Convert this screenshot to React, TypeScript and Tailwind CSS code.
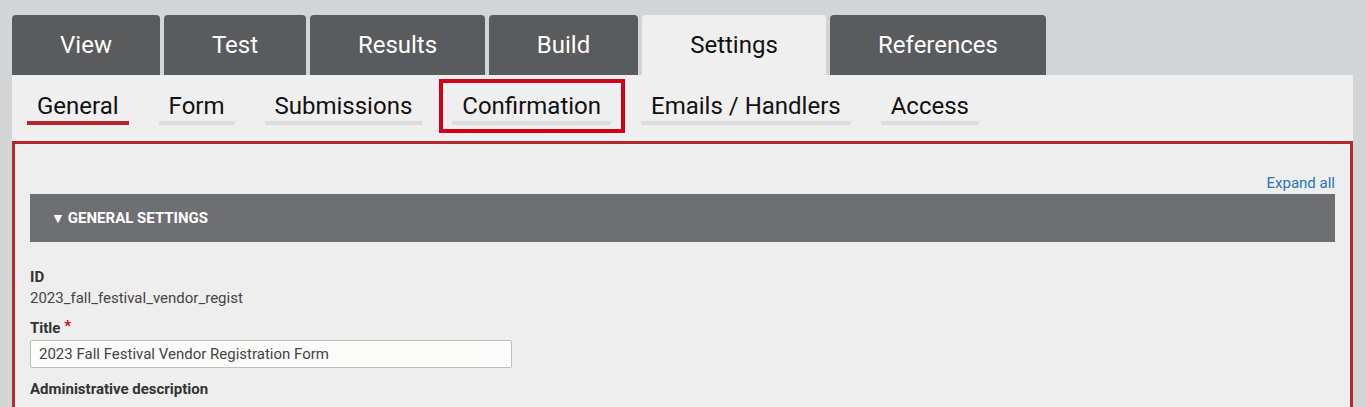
import React from "react";

const topTabs = [
  { label: "View", w: "w-[148px]" },
  { label: "Test", w: "w-[142px]" },
  { label: "Results", w: "w-[175px]" },
  { label: "Build", w: "w-[149px]" },
  { label: "Settings", w: "w-[184px]", active: true },
  { label: "References", w: "w-[216px]" },
];

const subTabs = [
  { label: "General", active: true },
  { label: "Form" },
  { label: "Submissions" },
  { label: "Confirmation", boxed: true },
  { label: "Emails / Handlers" },
  { label: "Access" },
];

export default function App() {
  return (
    <div
      className="w-[1365px] h-[407px] overflow-hidden bg-[#d3d4d6] pt-[15px] pl-[12px] pr-[12px]"
      style={{ fontFamily: "Roboto, 'Liberation Sans', Arial, sans-serif" }}
    >
      {/* Top tabs */}
      <div className="flex gap-[4px] h-[60px]">
        {topTabs.map((t) => (
          <div
            key={t.label}
            className={`${t.w} h-[60px] rounded-t-[4px] flex items-center justify-center text-[24px] leading-[28px] ${
              t.active ? "bg-[#efefef] text-[#111111]" : "bg-[#5a5b5d] text-white"
            }`}
          >
            {t.label}
          </div>
        ))}
      </div>

      {/* Sub tabs */}
      <div className="bg-[#efefef] h-[66px] pt-[17px] pl-[15px] flex gap-[30px]">
        {subTabs.map((s) => (
          <div key={s.label} className="relative h-[33px]">
            <div className="px-[10px] text-[24px] leading-[28px] text-[#111111] whitespace-nowrap">
              {s.label}
            </div>
            <div
              className={`mt-[1px] h-[4px] ${s.active ? "bg-[#b5272d]" : "bg-[#dcdcdc]"}`}
            />
            {s.boxed && (
              <div className="absolute -top-[13px] -bottom-[8px] -left-[13px] -right-[14px] border-[4px] border-[#d0021b]" />
            )}
          </div>
        ))}
      </div>

      {/* Red panel */}
      <div className="border-[3px] border-[#b5272d] bg-[#eeeeee] h-[300px] pl-[15px] pr-[15px] pt-[29px]">
        <div className="flex justify-end mb-[1px]">
          <span className="text-[15px] leading-[20px] text-[#1f74c4]">Expand all</span>
        </div>
        <div className="h-[48px] bg-[#6e6f73] flex items-center pl-[21px] text-white font-bold text-[15px] leading-[20px] uppercase">
          <span className="text-[14px] mr-[3px]">▼</span>
          <span>General settings</span>
        </div>

        <div className="mt-[25px] text-[15px] leading-[20px] font-bold text-[#333333]">ID</div>
        <div className="mt-[1px] text-[15px] leading-[20px] text-[#444444]">
          2023_fall_festival_vendor_regist
        </div>

        <div className="mt-[10px] text-[15px] leading-[20px] font-bold text-[#333333]">
          Title <span className="text-[#e3000f] relative -top-[2px]">*</span>
        </div>
        <div className="mt-[2px] w-[482px] h-[28px] border border-[#bdbdbd] rounded-[2px] bg-[#fcfcfa] flex items-center pl-[8px] text-[15px] text-[#444444]">
          2023 Fall Festival Vendor Registration Form
        </div>

        <div className="mt-[11px] text-[15px] leading-[20px] font-bold text-[#333333]">
          Administrative description
        </div>
      </div>
    </div>
  );
}
